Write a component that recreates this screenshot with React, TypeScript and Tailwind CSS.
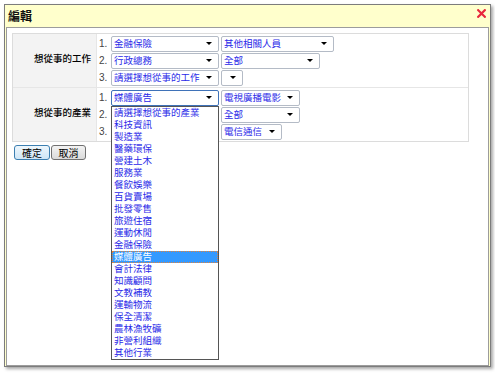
import React from "react";

const BLUE = "text-[#2a2ae8]";

function Arrow() {
  return (
    <span className="ml-auto mr-[6px] w-0 h-0 border-l-[3px] border-r-[3px] border-t-[3px] border-l-transparent border-r-transparent border-t-black shrink-0" />
  );
}

function Sel({
  w,
  text,
  focus,
  children,
}: {
  w: string;
  text?: string;
  focus?: boolean;
  children?: React.ReactNode;
}) {
  return (
    <div
      className={`relative ${w} h-[16px] mb-[1px] rounded-[2px] border bg-white flex items-center pl-[2px] ${
        focus ? "border-[#3f72b8]" : "border-[#b4bbc6]"
      }`}
    >
      <span className={`text-[9.5px] leading-none whitespace-nowrap ${BLUE}`}>{text}</span>
      <Arrow />
      {children}
    </div>
  );
}

function Num({ n }: { n: string }) {
  return (
    <span className="w-[14px] pl-[2px] text-[10px] leading-none text-[#444] font-['Liberation_Sans',sans-serif] shrink-0">
      {n}
    </span>
  );
}

const industries = [
  "請選擇想從事的產業",
  "科技資訊",
  "製造業",
  "醫藥環保",
  "營建土木",
  "服務業",
  "餐飲娛樂",
  "百貨賣場",
  "批發零售",
  "旅遊住宿",
  "運動休閒",
  "金融保險",
  "媒體廣告",
  "會計法律",
  "知識顧問",
  "文教補教",
  "運輸物流",
  "保全清潔",
  "農林漁牧礦",
  "非營利組織",
  "其他行業",
];

function DropList() {
  return (
    <div className="absolute left-[-1px] top-[15px] w-[108px] h-[254px] border border-[#555] bg-white z-10 flex flex-col">
      {industries.map((it) => {
        const sel = it === "媒體廣告";
        return (
          <div
            key={it}
            className={`h-[12px] flex items-center pl-[2px] text-[9.5px] leading-none whitespace-nowrap ${
              sel
                ? "bg-[#3399ff] text-white outline outline-1 outline-dotted outline-[#e0823c] -outline-offset-1"
                : BLUE
            }`}
          >
            {it}
          </div>
        );
      })}
    </div>
  );
}

function Line({ n, children }: { n: string; children: React.ReactNode }) {
  return (
    <div className="flex items-start">
      <div className="h-[16px] flex items-center">
        <Num n={n} />
      </div>
      <div className="flex gap-[2px]">{children}</div>
    </div>
  );
}

export default function App() {
  return (
    <div className="w-[495px] h-[373px] bg-white pt-[4px] pl-[4px] font-['Noto_Sans_CJK_TC','Noto_Sans_CJK_SC',sans-serif]">
      <div className="w-[487px] h-[363px] border border-[#7c7c7c] bg-[#ffffcc] px-[1px] flex flex-col shadow-[2px_2px_3px_rgba(0,0,0,0.35)]">
        <div className="h-[22px] shrink-0 flex items-start justify-between pl-[2px] pr-[3px]">
          <span className="mt-[5px] text-[12px] leading-none font-bold text-[#111]">編輯</span>
          <svg className="mt-[4px]" width="9" height="9" viewBox="0 0 9 9">
            <path d="M1.2 1.2 L7.8 7.8 M7.8 1.2 L1.2 7.8" stroke="#e8283c" strokeWidth="2.2" strokeLinecap="square" />
          </svg>
        </div>
        <div className="flex-1 border border-[#9c9c9c] bg-white pl-[5px] pt-[5px]">
          <div className="w-[457px] border border-[#dcdcdc] bg-[#e6e6e6] grid grid-cols-[83px_371px] grid-rows-[53px_53px] gap-[1px]">
            <div className="bg-[#f3f3f3] flex items-center justify-end pr-[5px] pb-[4px]">
              <span className="text-[9.5px] leading-none text-black font-medium">想從事的工作</span>
            </div>
            <div className="bg-white flex flex-col justify-center pt-[1px]">
              <Line n="1.">
                <Sel w="w-[108px]" text="金融保險" />
                <Sel w="w-[113px]" text="其他相關人員" />
              </Line>
              <Line n="2.">
                <Sel w="w-[108px]" text="行政總務" />
                <Sel w="w-[99px]" text="全部" />
              </Line>
              <Line n="3.">
                <Sel w="w-[108px]" text="請選擇想從事的工作" />
                <Sel w="w-[22px]" text="" />
              </Line>
            </div>
            <div className="bg-[#f3f3f3] flex items-center justify-end pr-[5px] pb-[4px]">
              <span className="text-[9.5px] leading-none text-black font-medium">想從事的產業</span>
            </div>
            <div className="bg-white flex flex-col justify-center pt-[1px]">
              <Line n="1.">
                <Sel w="w-[108px]" text="媒體廣告" focus>
                  <DropList />
                </Sel>
                <Sel w="w-[79px]" text="電視廣播電影" />
              </Line>
              <Line n="2.">
                <Sel w="w-[108px]" text="" />
                <Sel w="w-[79px]" text="全部" />
              </Line>
              <Line n="3.">
                <Sel w="w-[108px]" text="" />
                <Sel w="w-[61px]" text="電信通信" />
              </Line>
            </div>
          </div>
          <div className="flex gap-[1px] mt-[3px] ml-[2px]">
            <button className="w-[36px] h-[15px] rounded-[3px] border border-[#3c7fb1] bg-gradient-to-b from-[#eef7fd] to-[#cfe6f6] text-[10px] leading-none text-black flex items-center justify-center">
              確定
            </button>
            <button className="w-[35px] h-[15px] rounded-[3px] border border-[#707070] bg-gradient-to-b from-[#f3f3f3] to-[#dadada] text-[10px] leading-none text-black flex items-center justify-center">
              取消
            </button>
          </div>
        </div>
      </div>
    </div>
  );
}
